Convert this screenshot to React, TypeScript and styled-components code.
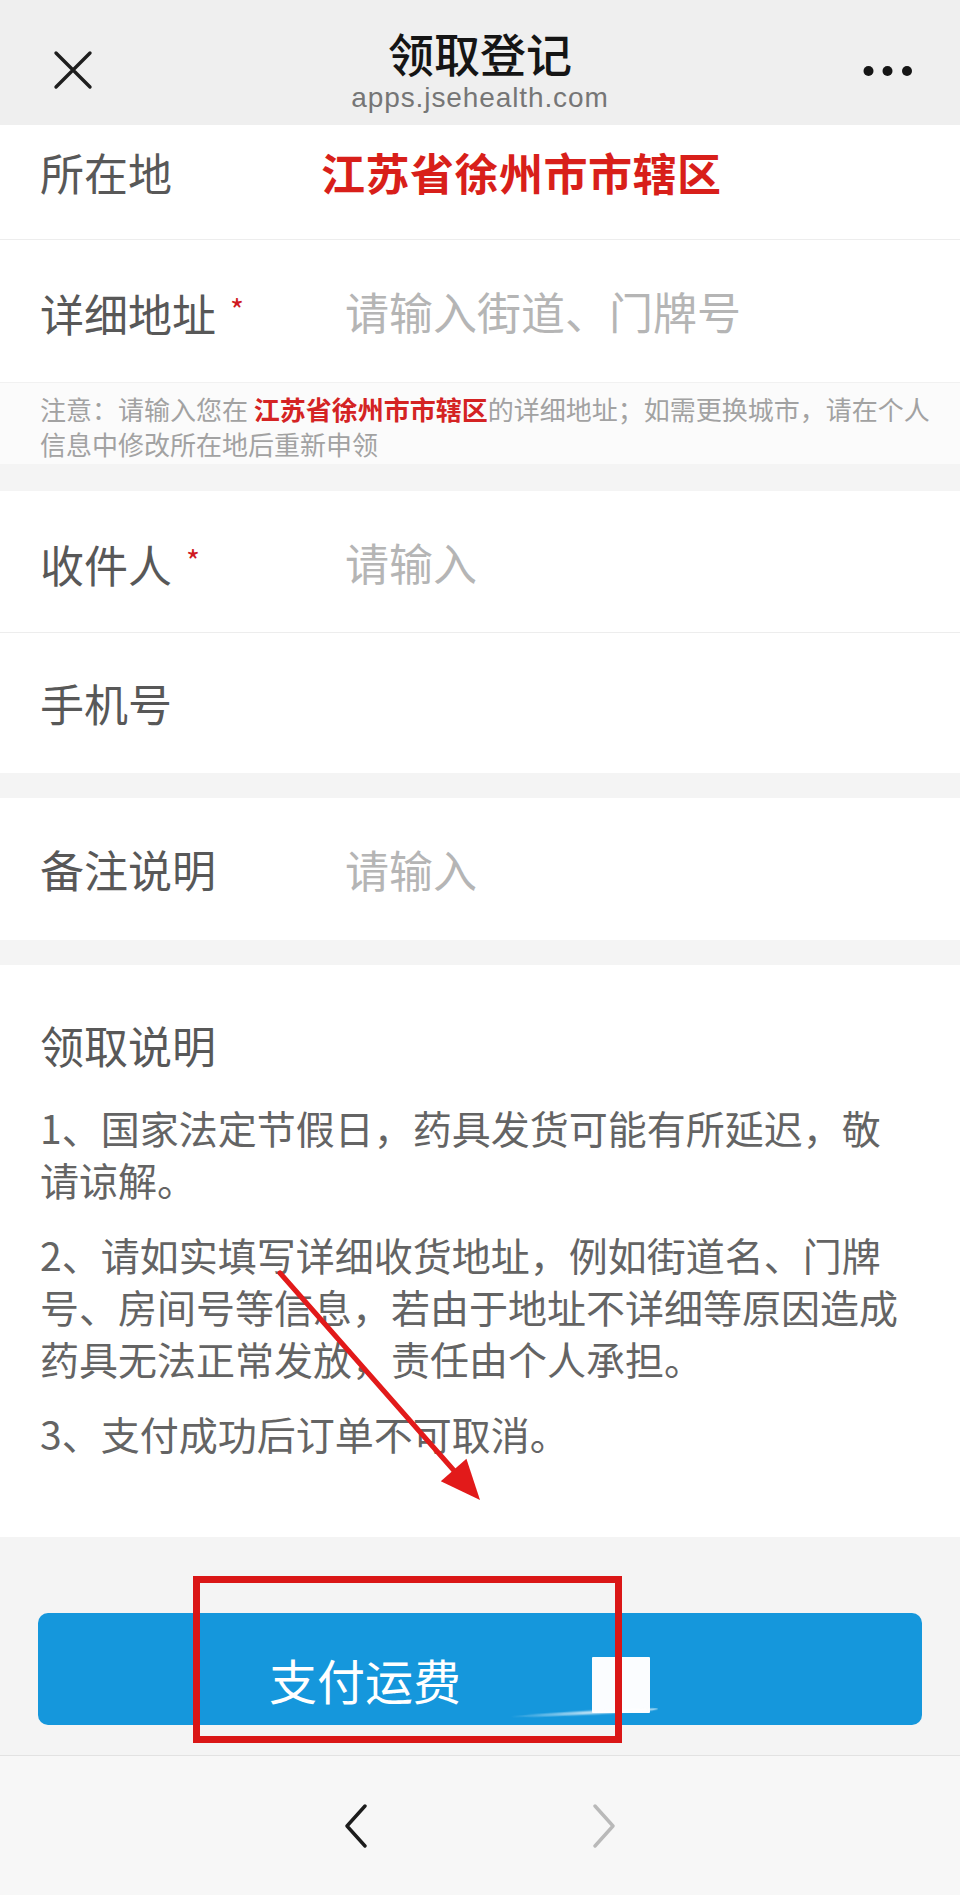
import React from "react";
import styled, { createGlobalStyle } from "styled-components";

const GlobalStyle = createGlobalStyle`
  html, body {
    margin: 0;
    padding: 0;
    background: #f4f4f4;
  }
  body {
    font-family: "Noto Sans CJK SC", "Noto Sans", sans-serif;
    -webkit-font-smoothing: antialiased;
  }
  * {
    box-sizing: border-box;
  }
`;

const Page = styled.div`
  position: relative;
  width: 960px;
  min-height: 1895px;
  display: flex;
  flex-direction: column;
  background: #f4f4f4;
  overflow: hidden;
`;

/* ---------- top navigation bar ---------- */

const TopBar = styled.header`
  height: 125px;
  background: #efefef;
  display: grid;
  grid-template-columns: 1fr auto 1fr;
  align-items: start;
`;

const IconSlot = styled.div<{ $side: "left" | "right" }>`
  display: flex;
  justify-self: ${(p) => (p.$side === "left" ? "start" : "end")};
  margin: ${(p) => (p.$side === "left" ? "50px 0 0 53px" : "65px 47px 0 0")};
`;

const TitleBlock = styled.div`
  margin-top: 27px;
  display: flex;
  flex-direction: column;
  align-items: center;
`;

const Title = styled.div`
  font-size: 46px;
  line-height: 50px;
  font-weight: 500;
  color: #151515;
`;

const Domain = styled.div`
  margin-top: 4px;
  font-family: "Liberation Sans", Arial, sans-serif;
  font-size: 28px;
  line-height: 34px;
  letter-spacing: 0.9px;
  color: #767676;
`;

/* ---------- form ---------- */

const Group = styled.section<{ $gap?: number }>`
  background: #ffffff;
  margin-top: ${(p) => p.$gap ?? 0}px;
  display: flex;
  flex-direction: column;
`;

const FieldRow = styled.div<{ $height: number; $lift?: number; $divider?: boolean }>`
  display: flex;
  align-items: center;
  height: ${(p) => p.$height}px;
  padding: 0 40px ${(p) => p.$lift ?? 0}px 40px;
  border-bottom: ${(p) => (p.$divider ? "1px solid #ededed" : "none")};
`;

const Label = styled.div`
  flex: 0 0 281px;
  font-size: 44px;
  line-height: 60px;
  color: #585858;
  white-space: nowrap;
`;

const Required = styled.span`
  font-size: 30px;
  color: #cf1a1f;
  margin-left: 14px;
  vertical-align: 10px;
`;

const StaticValue = styled.div`
  font-size: 44px;
  line-height: 60px;
  font-weight: 700;
  letter-spacing: 0.5px;
  color: #d81f1a;
  white-space: nowrap;
`;

const TextInput = styled.input`
  flex: 1;
  min-width: 0;
  height: 60px;
  padding: 0 0 0 24px;
  border: none;
  outline: none;
  background: transparent;
  font-family: inherit;
  font-size: 44px;
  color: #333;

  &::placeholder {
    color: #b5b5b5;
  }
`;

const Note = styled.div`
  background: #fbfbfb;
  border-top: 1px solid #f1f1f1;
  padding: 8px 16px 3px 40px;
  font-size: 26px;
  line-height: 35px;
  color: #a2a2a2;
`;

const NoteLine = styled.div`
  white-space: nowrap;
`;

const NoteCity = styled.span`
  color: #d42323;
  font-weight: 700;
`;

/* ---------- instructions ---------- */

const Instructions = styled.section`
  background: #ffffff;
  margin-top: 25px;
  padding: 50px 40px 78px;
  display: flex;
  flex-direction: column;
`;

const InstructionsTitle = styled.h2`
  margin: 0;
  font-size: 44px;
  line-height: 60px;
  font-weight: 400;
  color: #585858;
`;

const Item = styled.p<{ $first?: boolean }>`
  margin: ${(p) => (p.$first ? "26px" : "23px")} 0 0;
  font-size: 39px;
  line-height: 52px;
  color: #646464;
`;

const ItemLine = styled.span`
  display: block;
  white-space: nowrap;
`;

/* ---------- pay button ---------- */

const ButtonArea = styled.div`
  position: relative;
  padding: 76px 38px 30px;
  background: #f4f4f4;
`;

const PayButton = styled.button`
  position: relative;
  width: 100%;
  height: 112px;
  display: flex;
  align-items: center;
  padding: 20px 0 0 231px;
  border: none;
  border-radius: 10px;
  background: #1597dc;
  font-family: inherit;
  font-size: 48px;
  line-height: 60px;
  color: #ffffff;
  cursor: pointer;
`;

const Glare = styled.span`
  position: absolute;
  left: 554px;
  top: 44px;
  width: 58px;
  height: 56px;
  background: #fbfdff;
  border-radius: 1px;
`;

const GlareTrail = styled.span`
  position: absolute;
  left: 470px;
  top: 97px;
  width: 150px;
  height: 6px;
  border-radius: 50%;
  background: radial-gradient(ellipse at 70% 50%, rgba(255, 255, 255, 0.95), rgba(255, 255, 255, 0) 70%);
  transform: rotate(-3deg);
  filter: blur(0.6px);
`;

const Highlight = styled.div`
  position: absolute;
  left: 193px;
  top: 39px;
  width: 429px;
  height: 167px;
  border: 7px solid #da1616;
  pointer-events: none;
`;

const ArrowMark = styled.svg`
  position: absolute;
  left: 260px;
  top: 1255px;
  pointer-events: none;
`;

/* ---------- bottom browser toolbar ---------- */

const Toolbar = styled.nav`
  height: 140px;
  border-top: 1px solid #e2e2e2;
  background: #f7f7f7;
  display: flex;
  justify-content: center;
  align-items: center;
  gap: 224px;
`;

const CloseIcon = () => (
  <svg width="40" height="40" viewBox="0 0 40 40">
    <path d="M3 3 L37 37 M37 3 L3 37" stroke="#1e1e1e" strokeWidth="3.4" strokeLinecap="round" />
  </svg>
);

const MoreIcon = () => (
  <svg width="50" height="12" viewBox="0 0 50 12">
    <circle cx="5.5" cy="6" r="5" fill="#161616" />
    <circle cx="24.5" cy="6" r="5" fill="#161616" />
    <circle cx="44" cy="6" r="5" fill="#161616" />
  </svg>
);

const Chevron = ({ dir, color }: { dir: "back" | "forward"; color: string }) => (
  <svg width="24" height="44" viewBox="0 0 24 44">
    <polyline
      points={dir === "back" ? "21,2 3,22 21,42" : "3,2 21,22 3,42"}
      fill="none"
      stroke={color}
      strokeWidth="3.4"
      strokeLinecap="round"
      strokeLinejoin="round"
    />
  </svg>
);

const items: string[][] = [
  ["1、国家法定节假日，药具发货可能有所延迟，敬", "请谅解。"],
  [
    "2、请如实填写详细收货地址，例如街道名、门牌",
    "号、房间号等信息，若由于地址不详细等原因造成",
    "药具无法正常发放，责任由个人承担。",
  ],
  ["3、支付成功后订单不可取消。"],
];

export default function App() {
  return (
    <>
      <GlobalStyle />
      <Page>
        <TopBar>
          <IconSlot $side="left">
            <CloseIcon />
          </IconSlot>
          <TitleBlock>
            <Title>领取登记</Title>
            <Domain>apps.jsehealth.com</Domain>
          </TitleBlock>
          <IconSlot $side="right">
            <MoreIcon />
          </IconSlot>
        </TopBar>

        <Group>
          <FieldRow $height={115} $lift={20} $divider>
            <Label>所在地</Label>
            <StaticValue>江苏省徐州市市辖区</StaticValue>
          </FieldRow>
          <FieldRow $height={142}>
            <Label>
              详细地址<Required>*</Required>
            </Label>
            <TextInput placeholder="请输入街道、门牌号" />
          </FieldRow>
          <Note>
            <NoteLine>
              注意：请输入您在 <NoteCity>江苏省徐州市市辖区</NoteCity>的详细地址；如需更换城市，请在个人
            </NoteLine>
            <NoteLine>信息中修改所在地后重新申领</NoteLine>
          </Note>
        </Group>

        <Group $gap={27}>
          <FieldRow $height={142} $divider>
            <Label>
              收件人<Required>*</Required>
            </Label>
            <TextInput placeholder="请输入" />
          </FieldRow>
          <FieldRow $height={140}>
            <Label>手机号</Label>
            <TextInput type="tel" />
          </FieldRow>
        </Group>

        <Group $gap={25}>
          <FieldRow $height={142}>
            <Label>备注说明</Label>
            <TextInput placeholder="请输入" />
          </FieldRow>
        </Group>

        <Instructions>
          <InstructionsTitle>领取说明</InstructionsTitle>
          {items.map((lines, i) => (
            <Item key={i} $first={i === 0}>
              {lines.map((line) => (
                <ItemLine key={line}>{line}</ItemLine>
              ))}
            </Item>
          ))}
        </Instructions>

        <ButtonArea>
          <PayButton type="button">
            支付运费
            <Glare />
            <GlareTrail />
          </PayButton>
          <Highlight />
        </ButtonArea>

        <Toolbar>
          <Chevron dir="back" color="#1c1c1c" />
          <Chevron dir="forward" color="#b9b9b9" />
        </Toolbar>

        <ArrowMark width="240" height="260" viewBox="0 0 240 260">
          <line x1="20" y1="18" x2="197" y2="219" stroke="#e21a1a" strokeWidth="5" strokeLinecap="round" />
          <polygon points="220,245 180.8,226.2 206.4,203.8" fill="#e21a1a" />
        </ArrowMark>
      </Page>
    </>
  );
}
